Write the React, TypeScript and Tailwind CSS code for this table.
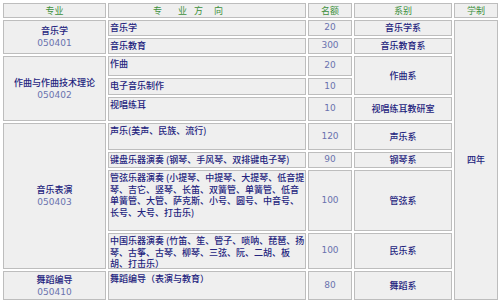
import type { ReactNode } from 'react';

const FONT = { fontFamily: '"Noto Sans CJK SC", "Noto Sans", sans-serif' };

function Cell({ className = '', children }: { className?: string; children?: ReactNode }) {
  return (
    <div className={`border border-[#bdbdbd] bg-[#efefef] overflow-hidden ${className}`}>
      {children}
    </div>
  );
}

function Head({ className = '', children }: { className?: string; children: ReactNode }) {
  return (
    <Cell className={`flex items-center justify-center text-[9px] leading-none text-[#3d8f3d] ${className}`}>
      {children}
    </Cell>
  );
}

function Major({ row, name, code }: { row: string; name: string; code: string }) {
  return (
    <Cell className={`col-start-1 ${row} flex flex-col items-center justify-center`}>
      <span className="text-[9px] leading-[13px] font-medium text-[#24247e]">{name}</span>
      <span className="text-[9px] leading-[13px] text-[#6a72ae] font-['DejaVu_Sans',sans-serif]">{code}</span>
    </Cell>
  );
}

function Dir({ row, lines }: { row: string; lines: string[] }) {
  return (
    <Cell className={`col-start-2 ${row} px-[1px] pt-[1px] text-[9px] leading-[11.6px] font-medium text-[#24247e] whitespace-pre`}>
      {lines.map((l) => (
        <div key={l}>{l}</div>
      ))}
    </Cell>
  );
}

function Num({ row, value }: { row: string; value: string }) {
  return (
    <Cell className={`col-start-3 ${row} flex items-center justify-center text-[9px] text-[#6a72ae] font-['DejaVu_Sans',sans-serif]`}>
      {value}
    </Cell>
  );
}

function Dept({ row, name }: { row: string; name: string }) {
  return (
    <Cell className={`col-start-4 ${row} flex items-center justify-center text-[9px] font-medium text-[#24247e]`}>
      {name}
    </Cell>
  );
}

export default function App() {
  return (
    <div className="w-[500px] h-[303px] bg-white pt-[3px] pl-[3px]" style={FONT}>
      <div className="grid grid-cols-[103px_198px_44px_98px_44px] grid-rows-[15px_16px_16px_20px_17px_24px_27px_16px_61px_36px_29px] gap-[2px]">
        <Head className="col-start-1 row-start-1">专业</Head>
        <Head className="col-start-2 row-start-1 !justify-start pl-[44px] gap-[7px]">
          <span>专</span>
          <span className="ml-[9px]">业</span>
          <span>方</span>
          <span className="ml-[4px]">向</span>
        </Head>
        <Head className="col-start-3 row-start-1">名额</Head>
        <Head className="col-start-4 row-start-1">系别</Head>
        <Head className="col-start-5 row-start-1">学制</Head>

        <Major row="row-start-2 row-span-2" name="音乐学" code="050401" />
        <Dir row="row-start-2" lines={['音乐学']} />
        <Num row="row-start-2" value="20" />
        <Dept row="row-start-2" name="音乐学系" />
        <Dir row="row-start-3" lines={['音乐教育']} />
        <Num row="row-start-3" value="300" />
        <Dept row="row-start-3" name="音乐教育系" />

        <Major row="row-start-4 row-span-3" name="作曲与作曲技术理论" code="050402" />
        <Dir row="row-start-4" lines={['作曲']} />
        <Num row="row-start-4" value="20" />
        <Dept row="row-start-4 row-span-2" name="作曲系" />
        <Dir row="row-start-5" lines={['电子音乐制作']} />
        <Num row="row-start-5" value="10" />
        <Dir row="row-start-6" lines={['视唱练耳']} />
        <Num row="row-start-6" value="10" />
        <Dept row="row-start-6" name="视唱练耳教研室" />

        <Major row="row-start-7 row-span-4" name="音乐表演" code="050403" />
        <Dir row="row-start-7" lines={['声乐(美声、民族、流行)']} />
        <Num row="row-start-7" value="120" />
        <Dept row="row-start-7" name="声乐系" />
        <Dir row="row-start-8" lines={['键盘乐器演奏 (钢琴、手风琴、双排键电子琴)']} />
        <Num row="row-start-8" value="90" />
        <Dept row="row-start-8" name="钢琴系" />
        <Dir
          row="row-start-9"
          lines={[
            '管弦乐器演奏 (小提琴、中提琴、大提琴、低音提',
            '琴、吉它、竖琴、长笛、双簧管、单簧管、低音',
            '单簧管、大管、萨克斯、小号、圆号、中音号、',
            '长号、大号、打击乐)',
          ]}
        />
        <Num row="row-start-9" value="100" />
        <Dept row="row-start-9" name="管弦系" />
        <Dir
          row="row-start-10"
          lines={[
            '中国乐器演奏 (竹笛、笙、管子、唢呐、琵琶、扬',
            '琴、古筝、古琴、柳琴、三弦、阮、二胡、板',
            '胡、打击乐）',
          ]}
        />
        <Num row="row-start-10" value="100" />
        <Dept row="row-start-10" name="民乐系" />

        <Major row="row-start-11" name="舞蹈编导" code="050410" />
        <Dir row="row-start-11" lines={['舞蹈编导（表演与教育）']} />
        <Num row="row-start-11" value="80" />
        <Dept row="row-start-11" name="舞蹈系" />

        <Cell className="col-start-5 row-start-2 row-span-10 flex items-center justify-center text-[9px] font-medium text-[#24247e]">
          四年
        </Cell>
      </div>
    </div>
  );
}
